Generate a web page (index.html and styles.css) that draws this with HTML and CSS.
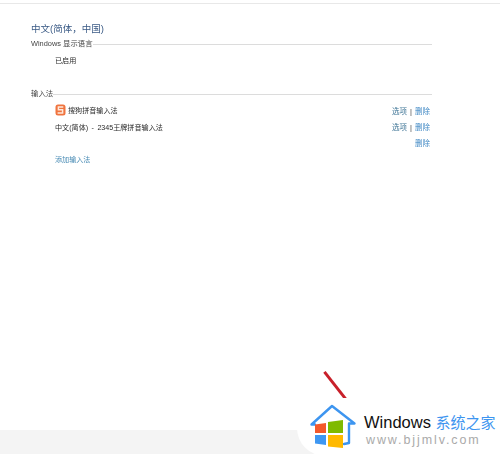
FILE: index.html
```html
<!DOCTYPE html>
<html lang="zh-CN">
<head>
    <meta charset="UTF-8">
    <title>中文(简体,中国)</title>
    <link rel="stylesheet" href="styles.css">
</head>
<body>
    <div class="page">
        <div class="content">
            <h1 class="lang-title">中文(简体，中国)</h1>

            <div class="group-head">
                <span>Windows 显示语言</span>
                <div class="group-line"></div>
            </div>
            <div class="row first">
                <span class="row-name">已启用</span>
            </div>

            <div class="group-head second">
                <span>输入法</span>
                <div class="group-line"></div>
            </div>
            <div class="row first">
                <span class="row-name">
                    <svg class="sogou" width="11" height="12" viewBox="0 0 11 12">
                        <rect x="0.5" y="0.5" width="10" height="11" rx="2.5" fill="#f0743f"/>
                        <path d="M8.3 3H3.4v2.8h4.2v3.2H2.6" fill="none" stroke="#fde9dc" stroke-width="1.5"/>
                    </svg>
                    搜狗拼音输入法
                </span>
                <span class="row-links"><a>选项</a><i>|</i><a class="del">删除</a></span>
            </div>
            <div class="row">
                <span class="row-name wide">中文(简体) - 2345王牌拼音输入法</span>
                <span class="row-links"><a>选项</a><i>|</i><a class="del">删除</a></span>
            </div>
            <div class="row">
                <span class="row-name"></span>
                <span class="row-links"><a class="del">删除</a></span>
            </div>
            <div class="row">
                <a class="add-link">添加输入法</a>
            </div>
        </div>

        <div class="bottom-bar"></div>

        <!-- red arrow + site watermark sit over the page -->
        <div class="arrow"></div>
        <div class="watermark">
            <svg class="wm-logo" width="48" height="46" viewBox="0 0 48 46">
                <path d="M5 20.5H1.5L22 2L44.5 19.5H39V39L34 40" fill="none" stroke="#3d95f0" stroke-width="2.4" stroke-linejoin="round" stroke-linecap="round"/>
                <path d="M5 20.5L16 19V29H5Z" fill="#f4592b"/>
                <path d="M18 18L33 16V29H18Z" fill="#7fba00"/>
                <path d="M5 31H16V41L5 39.5Z" fill="#3e97f2"/>
                <path d="M18 31H33V44L18 42.5Z" fill="#ffb900"/>
            </svg>
            <div class="wm-text">
                <div class="wm-title">Windows <span>系统之家</span></div>
                <div class="wm-url">www.bjjmlv.com</div>
            </div>
        </div>
    </div>
</body>
</html>
```

FILE: styles.css
```css
html, body {
    margin: 0;
    height: 100%;
}

body {
    background-color: #fff;
    font-family: "Liberation Sans", "Noto Sans CJK SC", sans-serif;
    color: #333;
    overflow: hidden;
}

.page {
    position: relative;
    height: 454px;
    display: flex;
    flex-direction: column;
}

.page::before {
    content: "";
    display: block;
    height: 1px;
    background-color: #e8e8e8;
    margin-top: 3px;
    flex-shrink: 0;
}

.content {
    flex: 1;
    padding: 18px 68px 0 31px;
    filter: blur(0.25px);
}

.lang-title {
    margin: 0;
    font-size: 9.5px;
    line-height: 14px;
    font-weight: 400;
    color: #3a5a85;
}

.group-head {
    display: flex;
    align-items: center;
    font-size: 7.4px;
    line-height: 12px;
    margin-top: 2px;
    color: #444;
}

.group-head.second {
    margin-top: 20px;
}

.group-line {
    flex: 1;
    height: 1px;
    background-color: #dcdcdc;
}

.row {
    display: flex;
    justify-content: space-between;
    align-items: center;
    height: 16px;
    padding-left: 24px;
    padding-right: 2px;
    font-size: 7.1px;
    color: #2a2a2a;
}

.row.first {
    margin-top: 2px;
}

.row-name {
    display: flex;
    align-items: center;
    gap: 2px;
}

.row-name.wide {
    word-spacing: 1.5px;
    padding-top: 1px;
}

.sogou {
    flex-shrink: 0;
}

.row-links {
    font-size: 7.5px;
    color: #3f7596;
}

.row-links i {
    font-style: normal;
    margin: 0 3px;
    color: #444;
}

.del {
    color: #3f88c4;
}

.add-link {
    padding-top: 1px;
    color: #4a8cb5;
}

.bottom-bar {
    height: 24px;
    background-color: #f4f4f4;
    flex-shrink: 0;
}

.arrow {
    position: absolute;
    left: 334px;
    top: 368px;
    width: 3px;
    height: 36px;
    background-color: #c8202a;
    transform: rotate(-38deg);
}

.watermark {
    position: absolute;
    left: 297px;
    right: 0;
    top: 398px;
    height: 58px;
    padding-left: 13px;
    box-sizing: border-box;
    display: flex;
    align-items: flex-start;
    gap: 6px;
    background-color: #fff;
    border-radius: 28px 0 0 28px;
}

.wm-logo {
    flex-shrink: 0;
    margin-top: 6px;
}

.wm-text {
    padding-top: 14px;
}

.wm-title {
    font-size: 16.5px;
    line-height: 20px;
    color: #111;
    white-space: nowrap;
}

.wm-title span {
    font-size: 15px;
    color: #3d95f0;
    font-family: "Noto Sans CJK SC", sans-serif;
}

.wm-url {
    font-size: 12.5px;
    line-height: 16px;
    margin-left: 2px;
    letter-spacing: 1.9px;
    color: #aaa;
    white-space: nowrap;
}
```
